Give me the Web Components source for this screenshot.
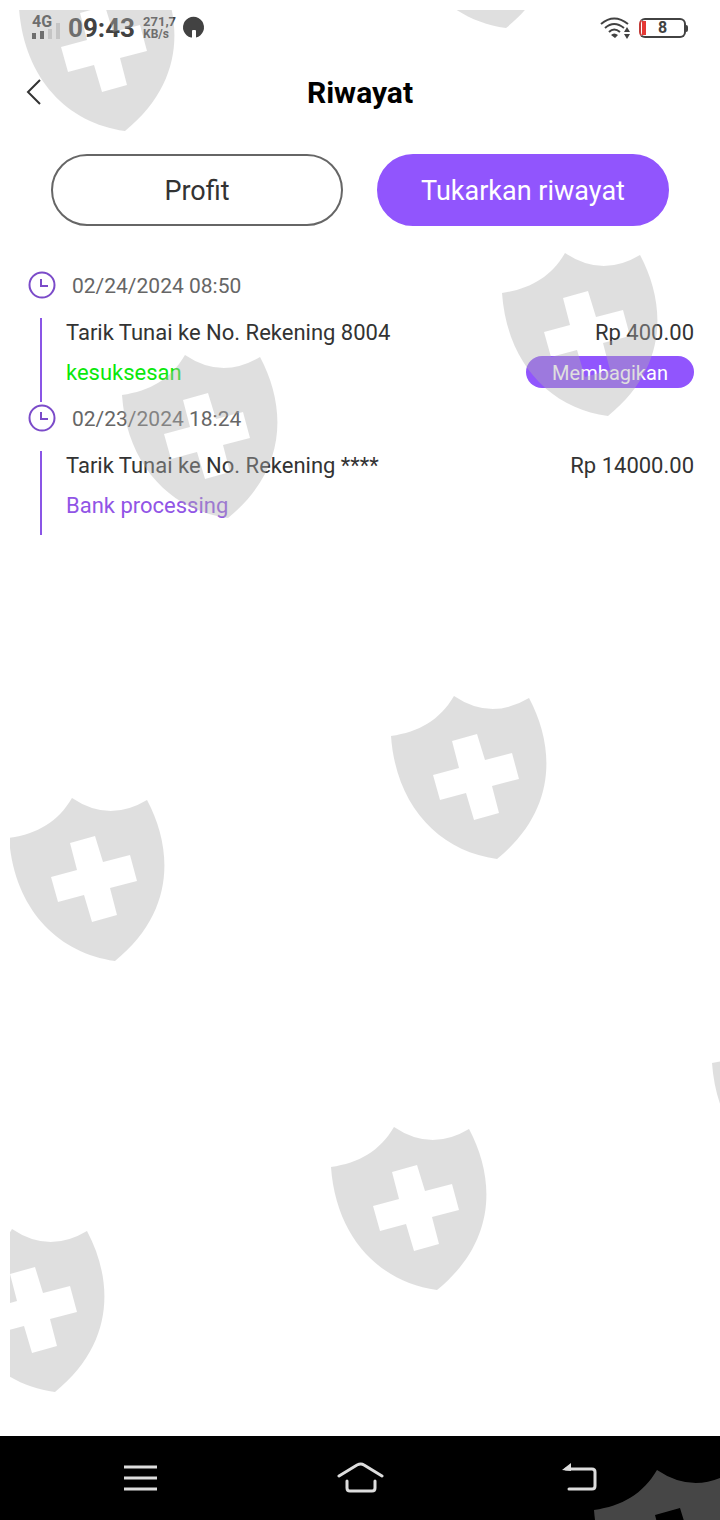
<!DOCTYPE html>
<html lang="id">
<head>
<meta charset="utf-8">
<meta name="viewport" content="width=device-width, initial-scale=1">
<title>Riwayat</title>
<style>
  body { margin: 0; background: #fff; font-family: Roboto, sans-serif; color: #333; }
</style>
</head>
<body>
<history-screen></history-screen>
<script>
  const define = (name, html, setup) => {
    const template = document.createElement('template');
    template.innerHTML = html;
    customElements.define(name, class extends HTMLElement {
      constructor() {
        super();
        this.attachShadow({ mode: 'open' }).append(template.content.cloneNode(true));
      }
      connectedCallback() { if (setup) setup(this, this.shadowRoot); }
    });
  };

  define('status-bar', `
    <style>
      :host { display: flex; justify-content: space-between; align-items: center; height: 56px; box-sizing: border-box; padding: 0 32px; color: #424242; font-weight: 700; }
      .group { display: flex; align-items: center; gap: 8px; }
      .stack { display: flex; flex-direction: column; font-size: 12px; line-height: 12px; }
      .rate { font-size: 13px; }
      .signal { font-size: 16px; line-height: 16px; }
      .clock { font-size: 26px; line-height: 34px; }
      svg { display: block; overflow: visible; }
      .battery { display: flex; align-items: center; }
      .cell { display: flex; align-items: center; justify-content: center; box-sizing: border-box; width: 47px; height: 20px; border: 2px solid #424242; border-left-color: #c23b38; border-radius: 6px; font-size: 16px; line-height: 16px; background: linear-gradient(#e53935, #e53935) 1px center / 4px 14px no-repeat; }
      .cap { width: 2px; height: 7px; background: #424242; border-radius: 0 2px 2px 0; }
    </style>
    <div class="group">
      <div class="stack signal">
        <span>4G</span>
        <svg width="28" height="12" aria-hidden="true">
          <path d="M0 3h4v6H0zM8 1h4v8H8z" fill="#424242"/>
          <path d="M16 -1h4v10h-4zM24 -7h4v16h-4z" fill="#d4d4d4"/>
        </svg>
      </div>
      <span class="clock">09:43</span>
      <div class="stack"><span class="rate">271,7</span><span>KB/s</span></div>
      <svg width="20" height="22" viewBox="0 0 20 22" aria-hidden="true"><path d="M7 20.500A10.500 10.500 0 1 1 12 20.500V14q0-1-1-1H9q-1 0-1 1v6.500z" fill="#424242"/></svg>
    </div>
    <div class="group">
      <svg width="31" height="22" viewBox="0 0 31 22" aria-hidden="true">
        <g fill="none" stroke="#424242" stroke-width="2"><path d="M1 7Q14-4 28 7M5 11Q14 3 24 11M9 15q5-5 11 0"/></g>
        <path d="M11 18q3-3 7 0l-3 3zM24 15l3-5 3 5zM24 17h6l-3 5z" fill="#424242"/>
      </svg>
      <div class="battery"><span class="cell">8</span><span class="cap"></span></div>
    </div>
  `);

  define('page-header', `
    <style>
      :host { display: grid; grid-template-columns: 68px 1fr 68px; align-items: center; height: 72px; }
      button { display: flex; align-items: center; height: 48px; padding: 0 0 0 26px; border: 0; background: none; cursor: pointer; }
      h1 { margin: 0; padding-top: 2px; text-align: center; font-size: 30px; line-height: 36px; font-weight: 700; color: #000; }
      svg { display: block; }
    </style>
    <button type="button" aria-label="Kembali">
      <svg width="17" height="26" viewBox="0 0 17 26" fill="none" stroke="#333" stroke-width="2" aria-hidden="true"><path d="M14 1L2 13l12 12"/></svg>
    </button>
    <h1><slot></slot></h1>
  `);

  define('pill-tab', `
    <style>
      :host { display: block; }
      button { display: block; width: 100%; height: 72px; box-sizing: border-box; padding: 2px 0 0; border: 2px solid #666; border-radius: 36px; background: #fff; color: #333; font: 400 27px/32px Roboto, sans-serif; cursor: pointer; }
      :host([selected]) button { border-color: #9155fd; background: #9155fd; color: #fff; }
    </style>
    <button type="button"><slot></slot></button>
  `, (host, root) => root.querySelector('button').setAttribute('aria-pressed', host.hasAttribute('selected')));

  define('history-record', `
    <style>
      :host { display: block; font-size: 22px; line-height: 30px; }
      .head { display: flex; align-items: center; gap: 16px; height: 32px; padding-left: 28px; color: #666; }
      .head slot { display: block; padding-top: 2px; }
      .body { display: flex; flex-direction: column; gap: 8px; box-sizing: border-box; height: 84px; margin: 17px 26px 0 40px; padding-left: 24px; border-left: 2px solid #8a55e6; }
      .row { display: flex; justify-content: space-between; align-items: flex-start; }
      .state { line-height: 34px; color: #9155e6; }
      :host([done]) .state { color: #0be80b; }
      svg { display: block; }
    </style>
    <div class="head">
      <svg width="28" height="28" viewBox="0 0 28 28" fill="none" stroke="#7b4bc9" stroke-width="2" aria-hidden="true"><circle cx="14" cy="14" r="12.500"/><path d="M13 8v7h7"/></svg>
      <slot name="time"></slot>
    </div>
    <div class="body">
      <div class="row"><slot name="title"></slot><slot name="amount"></slot></div>
      <div class="row state"><slot name="state"></slot><slot name="action"></slot></div>
    </div>
  `);

  define('share-button', `
    <style>
      :host { display: block; }
      button { display: block; width: 168px; height: 32px; padding: 2px 0 0; border: 0; border-radius: 16px; background: #9155fd; color: #fff; font: 400 20px/24px Roboto, sans-serif; cursor: pointer; }
    </style>
    <button type="button"><slot></slot></button>
  `);

  define('system-nav', `
    <style>
      :host { display: flex; align-items: center; justify-content: space-between; height: 84px; box-sizing: border-box; padding: 0 112px; background: #000; }
      button { display: flex; justify-content: center; width: 56px; padding: 0; border: 0; background: none; cursor: pointer; }
      svg { display: block; }
    </style>
    <button type="button" aria-label="Menu"><svg width="34" height="30" viewBox="0 0 34 30" stroke="#ddd" stroke-width="3" aria-hidden="true"><path d="M1 4h33M1 15h33M1 26h33"/></svg></button>
    <button type="button" aria-label="Beranda"><svg width="48" height="32" viewBox="0 0 48 32" fill="none" stroke="#ddd" stroke-width="3" stroke-linecap="round" aria-hidden="true"><path d="M3 14L21 3q4-2 7 0l18 11M11 19v7q0 3 3 3h22q3 0 3-3v-7"/></svg></button>
    <button type="button" aria-label="Kembali"><svg width="36" height="30" viewBox="0 0 36 30" fill="none" stroke="#ddd" stroke-width="3" stroke-linecap="round" aria-hidden="true"><path d="M4 6h26q3 0 3 3v14q0 3-3 3H7"/><path d="M0 7l9-7v8z" fill="#ddd" stroke="none"/></svg></button>
  `);

  // Decorative shields spread across the whole screen, above its content.
  define('shield-overlay', `
    <style>
      :host { position: absolute; inset: 10px 0 0 10px; overflow: hidden; pointer-events: none; }
      svg { display: block; width: 100%; height: 100%; opacity: .4; }
    </style>
    <svg aria-hidden="true" fill="#b0b0b0">
      <defs><path id="shield" fill-rule="evenodd" d="M0 40C28 36 49 24 63 0Q100 25 138 2C165 53 165 115 106 163C48 155 5 110 0 40ZM61 45L86 38L94 64L121 57L128 83L101 90L108 117L83 124L75 97L49 104L42 79L68 72Z"/></defs>
      <use href="#shield" x="9" y="-42"/>
      <use href="#shield" x="390" y="-145"/>
      <use href="#shield" x="492" y="243"/>
      <use href="#shield" x="112" y="345"/>
      <use href="#shield" x="381" y="686"/>
      <use href="#shield" x="-1" y="788"/>
      <use href="#shield" x="702" y="1013"/>
      <use href="#shield" x="321" y="1117"/>
      <use href="#shield" x="-61" y="1219"/>
      <use href="#shield" x="584" y="1460"/>
    </svg>
  `);

  define('history-screen', `
    <style>
      :host { position: relative; display: flex; flex-direction: column; min-height: 100vh; }
      main { flex: 1; }
      .tabs { display: grid; grid-template-columns: 1fr 1fr; gap: 34px; padding: 26px 51px 43px; }
      time { font-size: 21px; }
    </style>
    <status-bar></status-bar>
    <page-header>Riwayat</page-header>
    <main>
      <div class="tabs">
        <pill-tab>Profit</pill-tab>
        <pill-tab selected>Tukarkan riwayat</pill-tab>
      </div>
      <history-record done>
        <time slot="time" datetime="2024-02-24T08:50">02/24/2024 08:50</time>
        <span slot="title">Tarik Tunai ke No. Rekening 8004</span>
        <span slot="amount">Rp 400.00</span>
        <span slot="state">kesuksesan</span>
        <share-button slot="action">Membagikan</share-button>
      </history-record>
      <history-record>
        <time slot="time" datetime="2024-02-23T18:24">02/23/2024 18:24</time>
        <span slot="title">Tarik Tunai ke No. Rekening ****</span>
        <span slot="amount">Rp 14000.00</span>
        <span slot="state">Bank processing</span>
      </history-record>
    </main>
    <system-nav></system-nav>
    <shield-overlay></shield-overlay>
  `);
</script>
</body>
</html>
